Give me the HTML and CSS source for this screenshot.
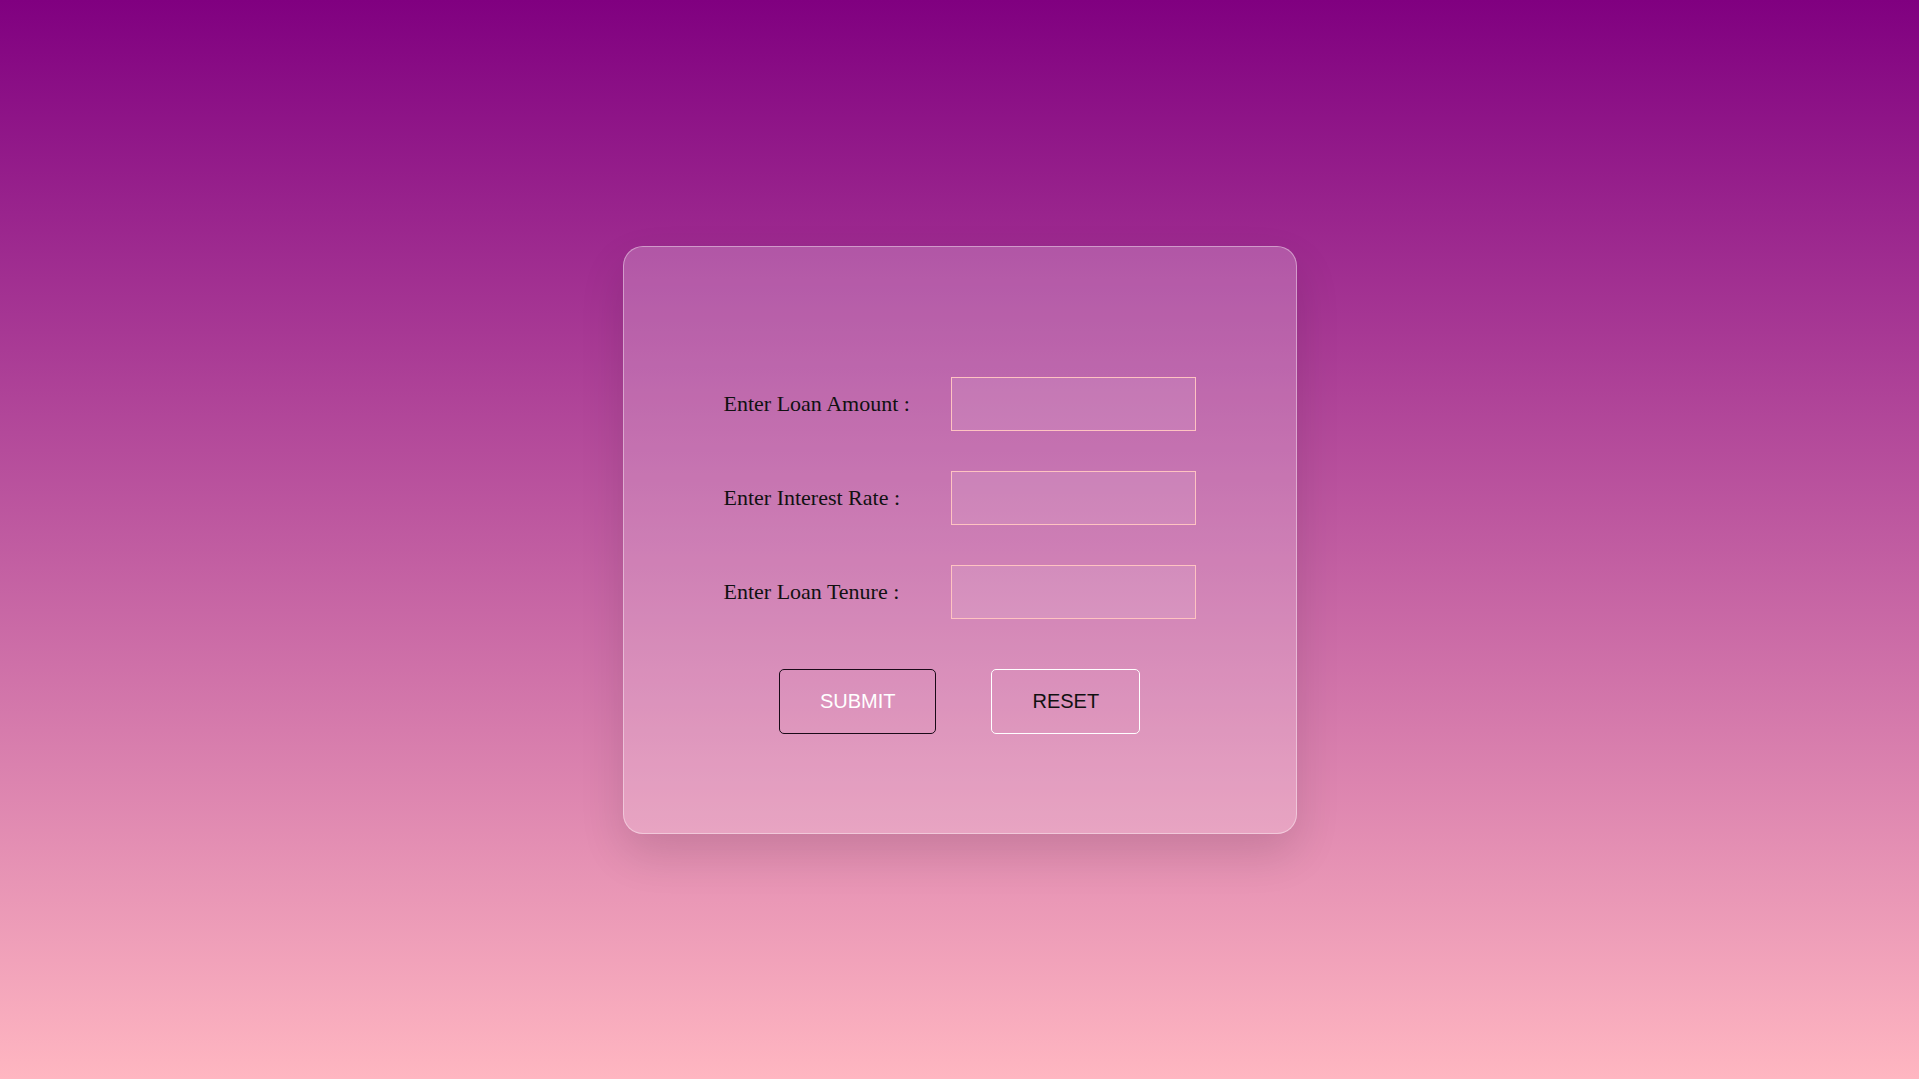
FILE: index.html
```html
<!DOCTYPE html>
<html lang="en">
<head>
<meta charset="utf-8">
<title>Loan Calculator</title>
<link rel="stylesheet" href="styles.css">
</head>
<body>
  <div class="card">
    <form class="form">
      <div class="fields">
        <label class="label" for="amount">Enter Loan Amount :</label>
        <input class="input" id="amount" type="text">
        <label class="label" for="rate">Enter Interest Rate :</label>
        <input class="input" id="rate" type="text">
        <label class="label" for="tenure">Enter Loan Tenure :</label>
        <input class="input" id="tenure" type="text">
      </div>
      <div class="buttons">
        <button class="btn btn-submit" type="button">SUBMIT</button>
        <button class="btn btn-reset" type="reset">RESET</button>
      </div>
    </form>
  </div>
</body>
</html>
```
FILE: styles.css
```css
html, body {
  margin: 0;
  height: 100%;
}
body {
  background: linear-gradient(to bottom, #800080, #ffb6c1);
  display: flex;
  align-items: center;
  justify-content: center;
  font-family: "Liberation Serif", "Times New Roman", serif;
}
.card {
  box-sizing: border-box;
  width: 674px;
  height: 588px;
  padding: 130px 100px 100px;
  background: rgba(255, 255, 255, 0.21);
  border: 1px solid rgba(255, 255, 255, 0.4);
  border-radius: 20px;
  box-shadow: 0 20px 45px rgba(0, 0, 0, 0.12);
}
.form {
  display: flex;
  flex-direction: column;
  gap: 50px;
}
.fields {
  display: grid;
  grid-template-columns: 227px 245px;
  row-gap: 40px;
  align-items: center;
}
.label {
  font-size: 22px;
  color: #111;
}
.input {
  box-sizing: border-box;
  width: 245px;
  height: 54px;
  margin: 0;
  background: rgba(255, 255, 255, 0.1);
  border: 1px solid #ffc3c2;
  outline: none;
}
.buttons {
  display: flex;
  justify-content: center;
  gap: 55px;
}
.btn {
  font-family: "Liberation Sans", Arial, sans-serif;
  font-size: 20px;
  line-height: 23px;
  padding: 20px 40px;
  background: transparent;
  border-radius: 5px;
  cursor: pointer;
}
.btn-submit {
  color: #fff;
  border: 1px solid #1a0a18;
}
.btn-reset {
  color: #111;
  border: 1px solid #fff;
}
```
